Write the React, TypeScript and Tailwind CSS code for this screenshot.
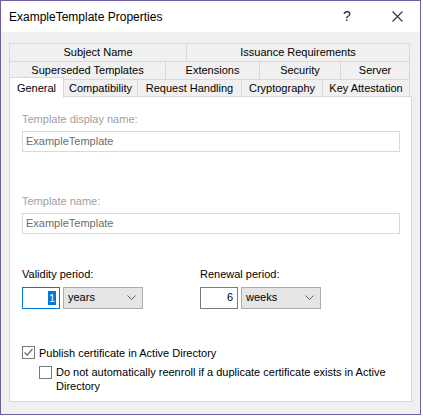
const font = { fontFamily: '"Liberation Sans", Arial, sans-serif' };

function Tab({ label, w, selected }: { label: string; w: string; selected?: boolean }) {
  if (selected) {
    return (
      <div
        className={`relative z-10 -mt-[2px] flex h-[21px] shrink-0 items-start justify-center border border-b-0 border-[#d9d9d9] bg-white pt-[2px] text-[11px] text-black ${w}`}
      >
        {label}
      </div>
    );
  }
  return (
    <div
      className={`-ml-px flex h-[19px] shrink-0 items-center justify-center border border-[#d9d9d9] bg-[#f0f0f0] text-[11px] text-black first:ml-0 ${w}`}
    >
      {label}
    </div>
  );
}

function Chevron() {
  return (
    <svg width="9" height="5" viewBox="0 0 9 5" className="shrink-0">
      <path d="M0.5 0.5 L4.5 4.5 L8.5 0.5" fill="none" stroke="#606060" strokeWidth="1" />
    </svg>
  );
}

function Spin({ value, focused }: { value: string; focused?: boolean }) {
  return (
    <div
      className={`flex h-[22px] w-[38px] items-center justify-end border bg-white pr-[3px] text-[11px] ${
        focused ? "border-[#0078d7]" : "border-[#7a7a7a]"
      }`}
    >
      {focused ? (
        <span className="bg-[#0078d7] px-[1px] leading-[14px] text-white">{value}</span>
      ) : (
        <span className="px-[1px] text-black">{value}</span>
      )}
    </div>
  );
}

function Select({ value }: { value: string }) {
  return (
    <div className="flex h-[22px] w-[80px] items-center justify-between border border-[#acacac] bg-[#e5e5e5] pl-[4px] pr-[6px] text-[11px] text-black">
      <span>{value}</span>
      <Chevron />
    </div>
  );
}

function Check({ checked }: { checked?: boolean }) {
  return (
    <div className="flex h-[13px] w-[13px] shrink-0 items-center justify-center border border-[#7a7a7a] bg-white">
      {checked && (
        <svg width="11" height="11" viewBox="0 0 11 11">
          <path d="M1.5 5.5 L4.2 8.2 L9.5 2" fill="none" stroke="#666" strokeWidth="1.2" />
        </svg>
      )}
    </div>
  );
}

export default function App() {
  return (
    <div className="h-[416px] w-[423px] bg-white" style={font}>
      <div className="flex h-[415px] w-[421px] flex-col border border-[#6f5fa0] bg-[#f0f0f0]">
        {/* Title bar */}
        <div className="flex h-[31px] shrink-0 items-center bg-white pl-[8px] text-[12px] text-black">
          <span className="flex-1">ExampleTemplate Properties</span>
          <span className="mr-[17px] w-[20px] text-center text-[14px] text-[#222]">?</span>
          <div className="flex w-[46px] justify-center">
            <svg width="11" height="11" viewBox="0 0 11 11">
              <path d="M0.5 0.5 L10.5 10.5 M10.5 0.5 L0.5 10.5" stroke="#333" strokeWidth="1.1" />
            </svg>
          </div>
        </div>

        {/* Tabs */}
        <div className="ml-[8px] mt-[11px] flex w-[403px] flex-col">
          <div className="flex">
            <Tab label="Subject Name" w="w-[178px]" />
            <Tab label="Issuance Requirements" w="w-[224px]" />
          </div>
          <div className="-mt-px flex">
            <Tab label="Superseded Templates" w="w-[157px]" />
            <Tab label="Extensions" w="w-[95px]" />
            <Tab label="Security" w="w-[82px]" />
            <Tab label="Server" w="w-[70px]" />
          </div>
          <div className="-mt-px flex items-start">
            <Tab label="General" w="w-[55px]" selected />
            <Tab label="Compatibility" w="w-[75px]" />
            <Tab label="Request Handling" w="w-[105px]" />
            <Tab label="Cryptography" w="w-[82px]" />
            <Tab label="Key Attestation" w="w-[88px]" />
          </div>

          {/* Panel */}
          <div className="-mt-[2px] flex h-[306px] flex-col border border-[#d9d9d9] bg-white pl-[12px] pt-[14px] text-[11px]">
            <div className="text-[#a0a0a0]">Template display name:</div>
            <div className="mt-[3px] flex h-[21px] w-[378px] items-center border border-[#d9d9d9] pl-[3px] text-[#6d6d6d]">
              ExampleTemplate
            </div>

            <div className="mt-[41px] text-[#a0a0a0]">Template name:</div>
            <div className="mt-[4px] flex h-[21px] w-[378px] items-center border border-[#d9d9d9] pl-[3px] text-[#6d6d6d]">
              ExampleTemplate
            </div>

            <div className="mt-[32px] flex">
              <div className="w-[178px]">
                <div className="text-black">Validity period:</div>
                <div className="mt-[4px] flex gap-[3px]">
                  <Spin value="1" focused />
                  <Select value="years" />
                </div>
              </div>
              <div>
                <div className="text-black">Renewal period:</div>
                <div className="mt-[4px] flex gap-[3px]">
                  <Spin value="6" />
                  <Select value="weeks" />
                </div>
              </div>
            </div>

            <div className="mt-[36px] flex items-center gap-[4px] text-black">
              <Check checked />
              <span>Publish certificate in Active Directory</span>
            </div>
            <div className="mt-[4px] flex items-start gap-[4px] pl-[17px] text-black">
              <div className="mt-[1px]">
                <Check />
              </div>
              <span className="w-[330px] leading-[14px]">
                Do not automatically reenroll if a duplicate certificate exists in Active Directory
              </span>
            </div>
          </div>
        </div>
      </div>
    </div>
  );
}
